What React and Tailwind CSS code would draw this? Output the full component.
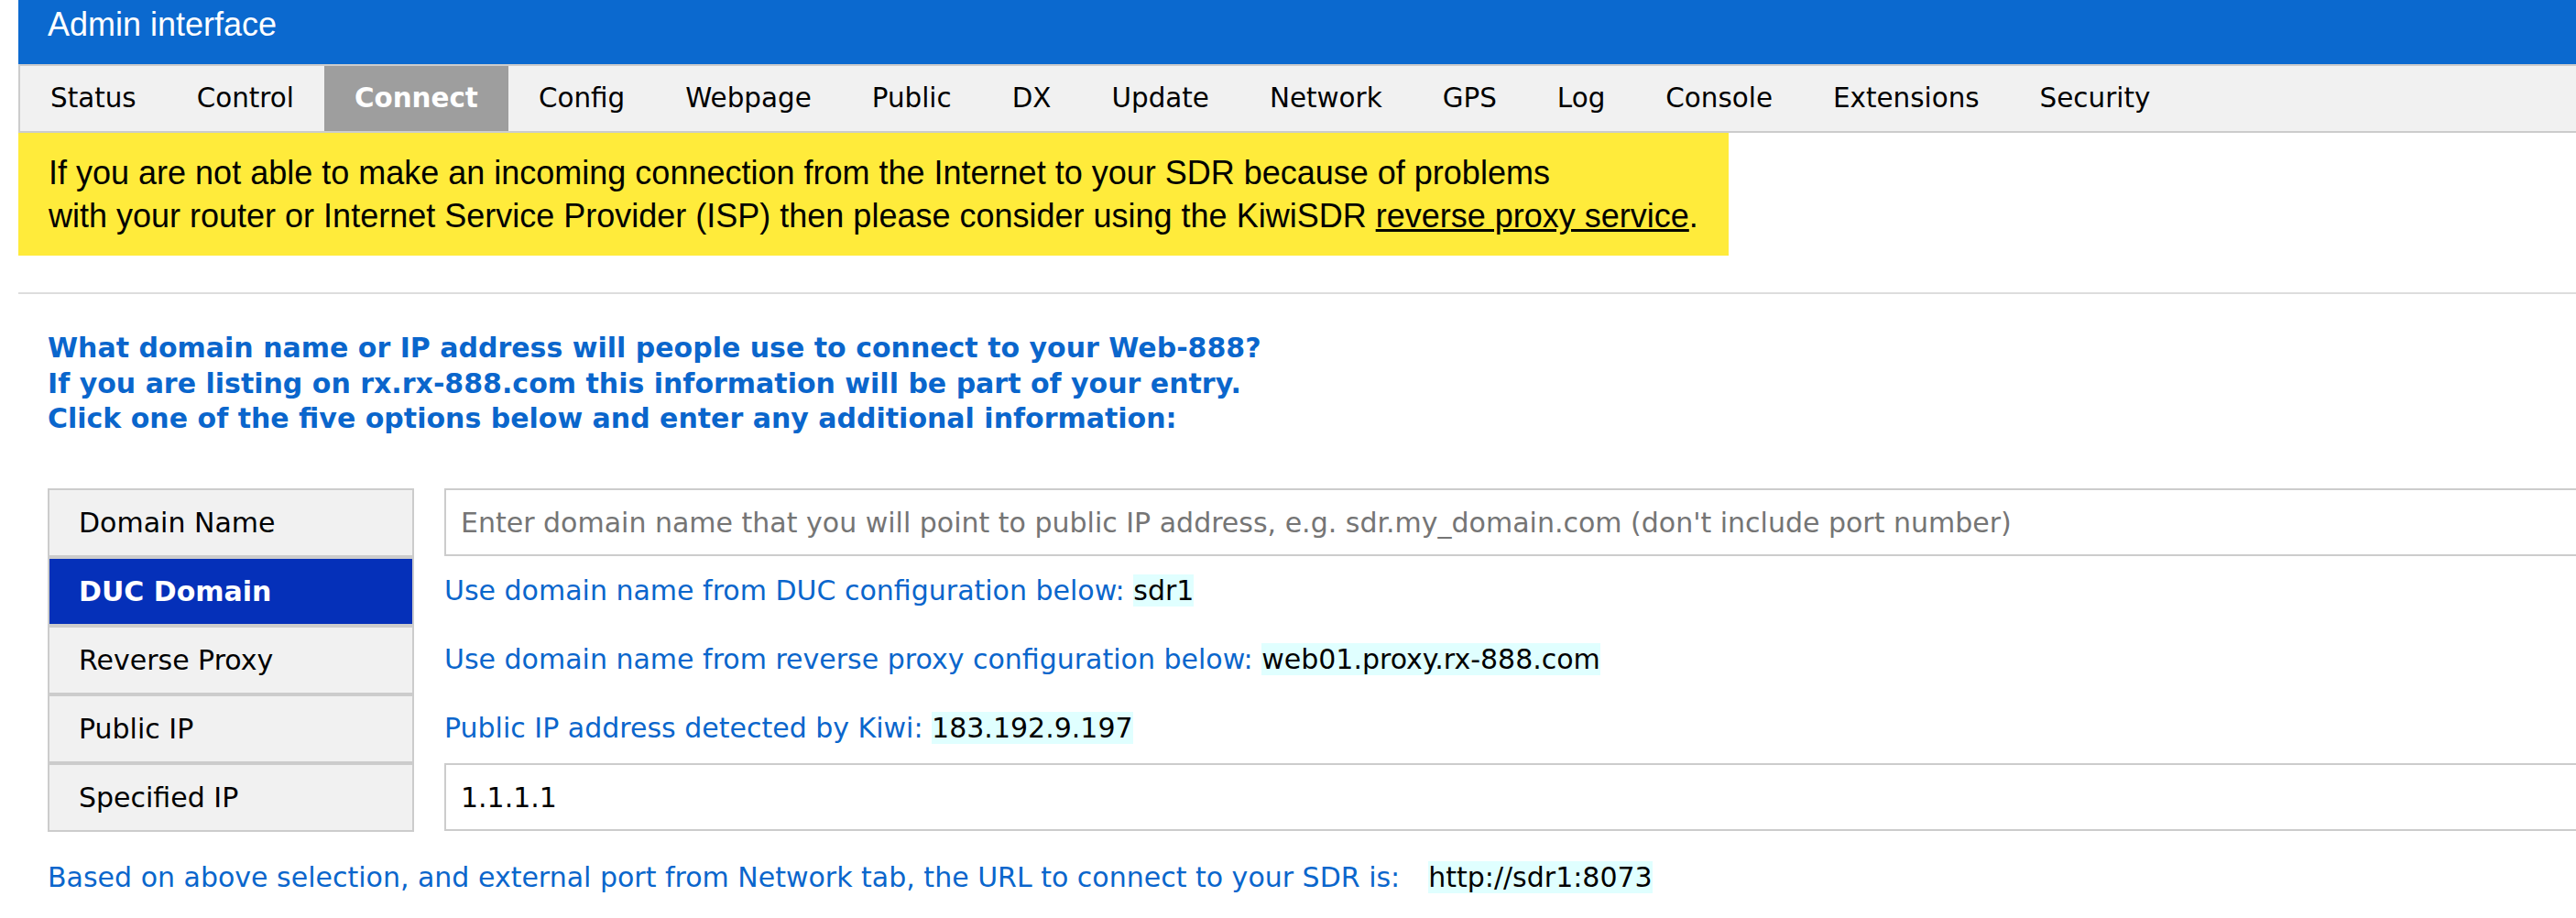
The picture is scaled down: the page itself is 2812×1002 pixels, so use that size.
import React from "react";

const tabs = ["Status","Control","Connect","Config","Webpage","Public","DX","Update","Network","GPS","Log","Console","Extensions","Security"];

function OptButton({ label, active }) {
  return (
    <div
      className={
        "h-[75px] border-2 border-[#ccc] flex items-center pl-[32px] " +
        (active ? "bg-[#0530b9] text-white font-bold" : "bg-[#f1f1f1] text-black")
      }
    >
      {label}
    </div>
  );
}

function InfoText({ label, value }) {
  return (
    <div className="h-[75px] flex items-center">
      <p className="leading-[38.7px] text-[#0a66cc]">
        {label} <span className="bg-[#e0ffff] text-black">{value}</span>
      </p>
    </div>
  );
}

function Field({ placeholder, value }) {
  return (
    <div className="h-[75px] flex items-center">
      <input
        readOnly
        placeholder={placeholder}
        defaultValue={value}
        className="w-full h-[74px] border-2 border-[#ccc] bg-white px-[16px] text-[30px] text-black placeholder:text-[#757575] outline-none font-['DejaVu_Sans',sans-serif]"
      />
    </div>
  );
}

export default function App() {
  return (
    <div className="w-full h-[1002px] overflow-hidden bg-white text-[30px] font-['DejaVu_Sans',sans-serif]">
      <div className="ml-[20px] w-[2900px]">
        <div className="h-[70px] bg-[#0b69cf] pl-[32px] pt-[6px] text-white text-[36px] leading-[41px] font-['Liberation_Sans',Arial,sans-serif]">
          Admin interface
        </div>
        <div className="flex h-[75px] border-2 border-[#ccc] bg-[#f1f1f1] text-[29.4px]">
          {tabs.map((t) => (
            <div
              key={t}
              className={
                "flex items-center px-[33px] " +
                (t === "Connect" ? "bg-[#9e9e9e] text-white font-bold" : "text-black")
              }
            >
              {t}
            </div>
          ))}
        </div>
        <div className="w-fit bg-[#ffeb3b] px-[33px] py-[20px] text-[36px] leading-[47px] text-black font-['Liberation_Sans',Arial,sans-serif]">
          If you are not able to make an incoming connection from the Internet to your SDR because of problems
          <br />
          with your router or Internet Service Provider (ISP) then please consider using the KiwiSDR{" "}
          <span className="underline">reverse proxy service</span>.
        </div>
        <div className="mt-[40px] border-t-2 border-[#ddd]" />
        <div className="mt-[40px] pl-[32px] text-[30px] leading-[38.5px] font-bold text-[#0a66cc]">
          What domain name or IP address will people use to connect to your Web-888?
          <br />
          If you are listing on rx.rx-888.com this information will be part of your entry.
          <br />
          Click one of the five options below and enter any additional information:
        </div>
        <div className="mt-[56px] pl-[32px] grid grid-cols-[400px_1fr] gap-x-[33px]">
          <OptButton label="Domain Name" />
          <Field placeholder="Enter domain name that you will point to public IP address, e.g. sdr.my_domain.com (don't include port number)" />
          <OptButton label="DUC Domain" active />
          <InfoText label="Use domain name from DUC configuration below:" value="sdr1" />
          <OptButton label="Reverse Proxy" />
          <InfoText label="Use domain name from reverse proxy configuration below:" value="web01.proxy.rx-888.com" />
          <OptButton label="Public IP" />
          <InfoText label="Public IP address detected by Kiwi:" value="183.192.9.197" />
          <OptButton label="Specified IP" />
          <Field value="1.1.1.1" />
        </div>
        <div className="mt-[30px] pl-[32px] leading-[39px] text-[#0a66cc]">
          Based on above selection, and external port from Network tab, the URL to connect to your SDR is:
          <span className="ml-[31px] bg-[#e0ffff] text-black">http://sdr1:8073</span>
        </div>
      </div>
    </div>
  );
}
